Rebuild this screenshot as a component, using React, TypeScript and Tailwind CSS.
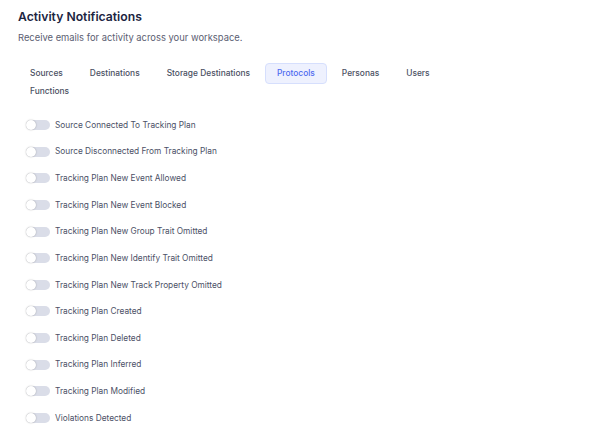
import { useState } from "react";

const tabs = ["Sources", "Destinations", "Storage Destinations", "Protocols", "Personas", "Users", "Functions"];

const events = [
  "Source Connected To Tracking Plan",
  "Source Disconnected From Tracking Plan",
  "Tracking Plan New Event Allowed",
  "Tracking Plan New Event Blocked",
  "Tracking Plan New Group Trait Omitted",
  "Tracking Plan New Identify Trait Omitted",
  "Tracking Plan New Track Property Omitted",
  "Tracking Plan Created",
  "Tracking Plan Deleted",
  "Tracking Plan Inferred",
  "Tracking Plan Modified",
  "Violations Detected",
];

function Toggle({ on, onClick }: { on: boolean; onClick: () => void }) {
  return (
    <button
      onClick={onClick}
      className={`relative w-[24px] h-[10px] rounded-full ${on ? "bg-[#5a74f0]" : "bg-[#dadde8]"}`}
    >
      <span
        className={`absolute top-0 w-[10px] h-[10px] rounded-full bg-white shadow-[0_0_1.5px_rgba(0,0,0,0.35)] ${on ? "left-[14px]" : "left-0"}`}
      />
    </button>
  );
}

export default function App() {
  const [active, setActive] = useState("Protocols");
  const [enabled, setEnabled] = useState<Record<string, boolean>>({});

  return (
    <div className="w-[609px] h-[440px] bg-white overflow-hidden font-['Inter',sans-serif]">
      <div className="pl-[18px] pt-[7px]">
        <h1 className="text-[12.2px] leading-[20px] font-semibold text-[#1c2541]">Activity Notifications</h1>
        <p className="mt-[4px] text-[9.4px] leading-[14px] text-[#5b6072]">
          Receive emails for activity across your workspace.
        </p>

        <div className="mt-[19px] w-[470px] flex flex-wrap gap-x-[3px]">
          {tabs.map((t) => (
            <button
              key={t}
              onClick={() => setActive(t)}
              className={`h-[21px] -my-[1.5px] px-[11px] rounded-[4px] border text-[8.4px] font-medium flex items-center ${
                active === t
                  ? "bg-[#eef1fe] border-[#d6dffd] text-[#4f6bf0]"
                  : "border-transparent text-[#4a4f62]"
              }`}
            >
              {t}
            </button>
          ))}
        </div>

        <div className="mt-[11.7px] pl-[8px] flex flex-col">
          {events.map((e) => (
            <div key={e} className="h-[26.64px] flex items-center gap-[5px]">
              <Toggle on={!!enabled[e]} onClick={() => setEnabled({ ...enabled, [e]: !enabled[e] })} />
              <span className="text-[8.3px] text-[#4b5066]">{e}</span>
            </div>
          ))}
        </div>
      </div>
    </div>
  );
}
